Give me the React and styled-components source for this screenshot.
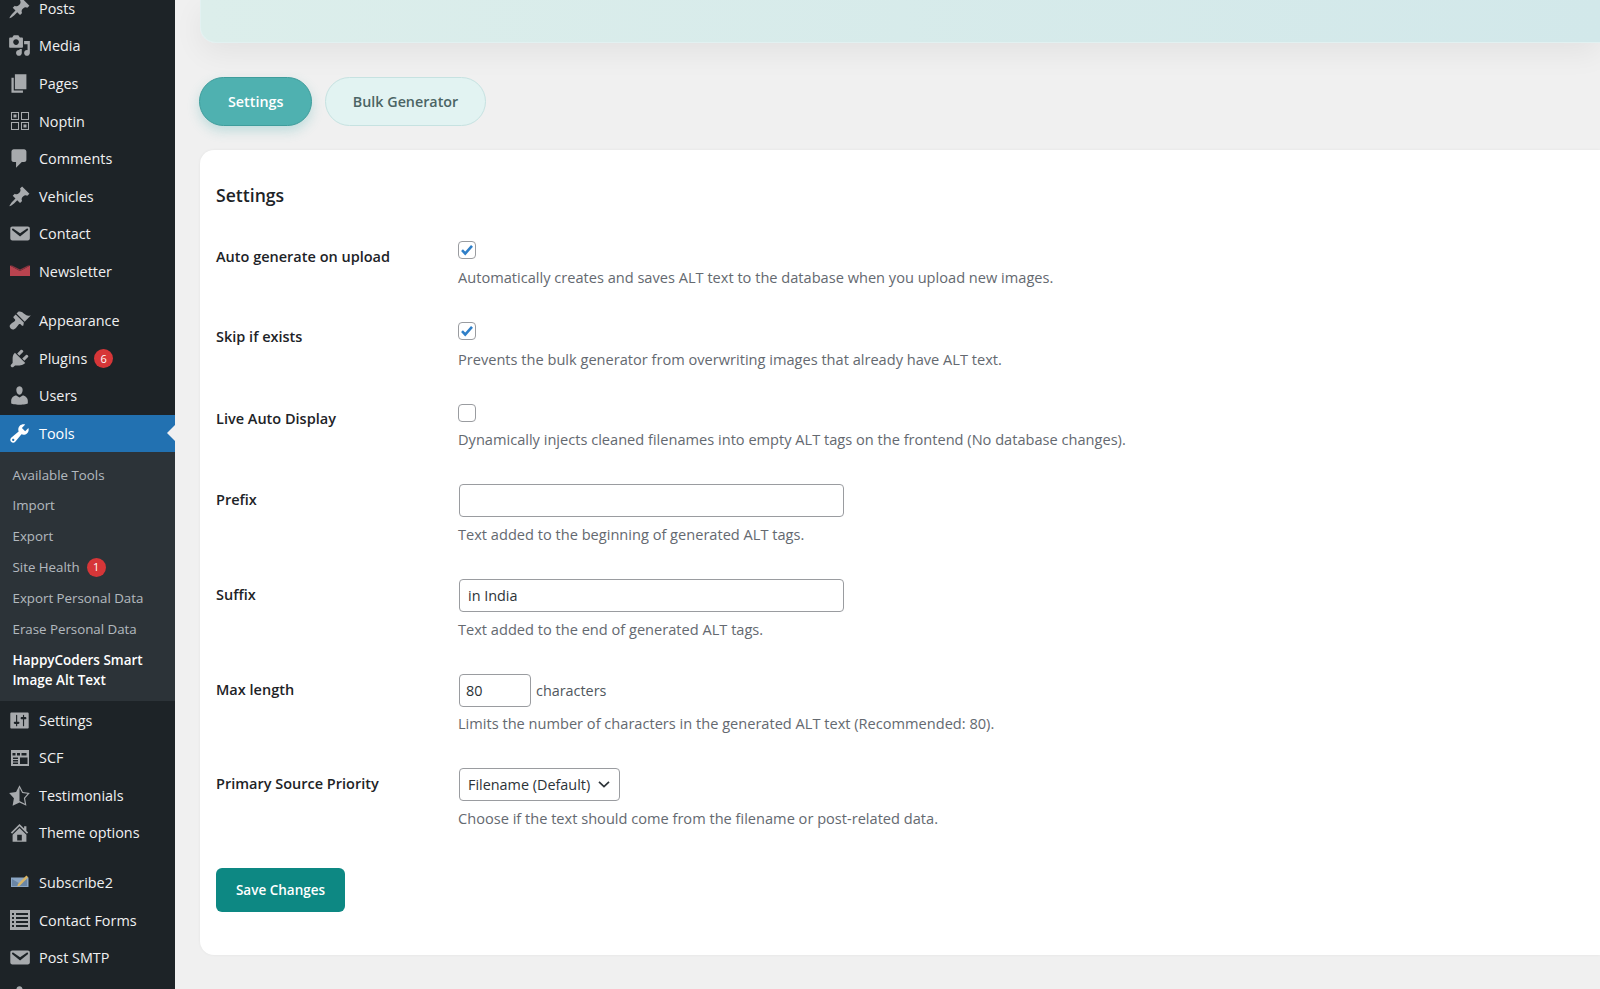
import React from 'react';
import styled, { createGlobalStyle } from 'styled-components';

const Global = createGlobalStyle`
  html, body { margin: 0; padding: 0; background: #f0f0f0; }
  body { font-family: "Open Sans", "Noto Sans", "Liberation Sans", sans-serif; }
`;

const Page = styled.div`
  display: flex;
  width: 1600px;
  height: 989px;
  overflow: hidden;
  background: #f0f0f0;
`;
const Sidebar = styled.nav`
  flex: 0 0 175px;
  height: 989px;
  overflow: hidden;
  background: #1d2327;
`;
const Menu = styled.ul`
  list-style: none;
  margin: ${p => p.$top || 0}px 0 0;
  padding: 0;
`;
const MenuItem = styled.li`
  position: relative;
  display: flex;
  align-items: center;
  height: 37.6px;
  background: ${p => (p.$active ? '#2271b1' : 'transparent')};
  color: ${p => (p.$active ? '#fff' : '#f0f0f1')};
  font-size: 14.4px;
  ${p => p.$active && `
    &::after {
      content: '';
      position: absolute;
      right: 0;
      top: 50%;
      margin-top: -8px;
      border: 8px solid transparent;
      border-right-color: #f0f0f1;
      border-left-width: 0;
    }
  `}
`;
const IconSlot = styled.span`
  flex: 0 0 39px;
  display: flex;
  justify-content: center;
  box-sizing: border-box;
  color: ${p => (p.$active ? '#fff' : '#a7aaad')};
  svg { display: block; }
`;
const Badge = styled.span`
  display: inline-flex;
  align-items: center;
  justify-content: center;
  width: 19px;
  height: 19px;
  margin-left: ${p => p.$gap}px;
  border-radius: 50%;
  background: #d63638;
  color: #fff;
  font-size: 11px;
`;
const Sub = styled.ul`
  list-style: none;
  margin: 0;
  padding: 7px 0 6px;
  background: #2c3338;
`;
const SubItem = styled.li`
  display: flex;
  align-items: center;
  padding: 5.45px 12px 5.45px 12.5px;
  box-sizing: border-box;
  color: ${p => (p.$current ? '#fff' : 'rgba(240,246,252,.7)')};
  font-size: ${p => (p.$current ? 13.5 : 13.3)}px;
  font-weight: ${p => (p.$current ? 600 : 400)};
  line-height: 20px;
`;
const SubText = styled.span`
  display: block;
`;
const Main = styled.main`
  flex: 1;
  min-width: 0;
  padding-left: 25px;
  display: flex;
  flex-direction: column;
  align-items: stretch;
`;
const Hero = styled.div`
  height: 43px;
  border-radius: 0 0 0 16px;
  background: linear-gradient(90deg, #dceeeb 0%, #d2e8ea 100%);
  border-bottom: 1px solid #e2f1f1;
  border-left: 1px solid #e2f1f1;
  box-sizing: border-box;
  box-shadow: 0 10px 30px rgba(0,0,0,.06);
`;
const Tabs = styled.div`
  display: flex;
  gap: 13px;
  margin-top: 34px;
  margin-left: -1px;
`;
const Tab = styled.button`
  height: 49px;
  padding: 0 ${p => (p.$active ? 28 : 26.5)}px;
  border-radius: 25px;
  font: 600 14.3px "Open Sans", "Noto Sans", sans-serif;
  cursor: pointer;
  color: ${p => (p.$active ? '#fff' : '#4b6464')};
  background: ${p => (p.$active ? '#4fb1b0' : '#e2f3f2')};
  border: 1px solid ${p => (p.$active ? '#3f9d9c' : '#c6e2e1')};
  box-shadow: ${p => (p.$active ? '0 5px 12px rgba(79,177,176,.3)' : 'none')};
`;
const Card = styled.section`
  margin-top: 24px;
  padding: 34px 16px 43px;
  background: #fff;
  border-radius: 14px 0 0 14px;
  box-shadow: 0 0 3px rgba(0,0,0,.06);
`;
const Heading = styled.h2`
  margin: 0 0 34px;
  font-size: 17.6px;
  font-weight: 600;
  line-height: 23px;
  color: #1d2327;
`;
const Form = styled.form`
  display: flex;
  flex-direction: column;
  gap: 34px;
`;
const Row = styled.div`
  display: grid;
  grid-template-columns: 242px 1fr;
`;
const Label = styled.label`
  padding-top: ${p => p.$top}px;
  font-size: 14.5px;
  font-weight: 600;
  line-height: 20px;
  color: #1d2327;
`;
const Desc = styled.p`
  margin: ${p => p.$top}px 0 ${p => p.$bottom}px;
  font-size: 14.6px;
  line-height: 20px;
  color: #646970;
`;
const CheckBox = styled.span`
  display: flex;
  align-items: center;
  justify-content: center;
  width: 18px;
  height: 18px;
  box-sizing: border-box;
  background: #fff;
  border: 1px solid #9a9ca0;
  border-radius: 4px;
`;
const Line = styled.div`
  display: flex;
  align-items: center;
  gap: 5px;
  color: #50575e;
  font-size: 14.4px;
`;
const Input = styled.input`
  display: block;
  width: ${p => p.$w}px;
  height: 33px;
  margin-left: 1px;
  padding: 0 ${p => p.$pad}px;
  box-sizing: border-box;
  border: 1px solid #9a9ca0;
  border-radius: 4px;
  background: #fff;
  color: #2c3338;
  font: 14.4px "Open Sans", "Noto Sans", sans-serif;
  outline: none;
`;
const Select = styled.div`
  display: flex;
  align-items: center;
  justify-content: space-between;
  width: 161px;
  height: 33px;
  margin-left: 1px;
  padding: 0 8px;
  box-sizing: border-box;
  border: 1px solid #9a9ca0;
  border-radius: 4px;
  background: #fff;
  color: #2c3338;
  font-size: 14.4px;
`;
const Save = styled.button`
  display: block;
  width: 129px;
  height: 44px;
  margin-top: 39px;
  padding: 0;
  border: 0;
  border-radius: 6px;
  background: #0d8883;
  color: #fff;
  font: 600 13.5px "Open Sans", "Noto Sans", sans-serif;
`;

const I = ({ d, size = 23, rule }) => (
  <svg width={size} height={size} viewBox="0 0 20 20" fill="currentColor">
    <path d={d} fillRule={rule} />
  </svg>
);
const pin = 'M10.44 3.02l1.82-1.82 6.36 6.35-1.83 1.82c-1.05-.68-2.48-.57-3.41.36l-.75.75c-.92.93-1.04 2.35-.35 3.41l-1.83 1.82-2.41-2.41-2.8 2.79c-.42.42-3.38 2.71-3.8 2.29s1.86-3.39 2.28-3.81l2.79-2.79L4.1 9.36l1.83-1.82c1.05.69 2.48.57 3.4-.36l.75-.75c.93-.92 1.05-2.35.36-3.41z';
const media = 'M13 11V4c0-.55-.45-1-1-1h-1.67L9 1H5L3.67 3H2c-.55 0-1 .45-1 1v7c0 .55.45 1 1 1h10c.55 0 1-.45 1-1zM7 4.5c1.38 0 2.5 1.12 2.5 2.5S8.38 9.5 7 9.5 4.5 8.38 4.5 7 5.62 4.5 7 4.5zM14 6h5v10.5c0 1.38-1.12 2.5-2.5 2.5S14 17.88 14 16.5s1.12-2.5 2.5-2.5c.17 0 .34.02.5.05V9h-3V6zm-4 8.05V13h2v3.5c0 1.38-1.12 2.5-2.5 2.5S7 17.88 7 16.5 8.12 14 9.5 14c.17 0 .34.02.5.05z';
const page = 'M6 15V2h10v13H6zm-1 1h8v2H3V5h2v11z';
const comment = 'M5 2h9c1.1 0 2 .9 2 2v7c0 1.1-.9 2-2 2h-2l-5 5v-5H5c-1.1 0-2-.9-2-2V4c0-1.1.9-2 2-2z';
const mail = 'M3.87 4h13.25C18.37 4 19 4.59 19 5.79v8.42c0 1.19-.63 1.79-1.88 1.79H3.87c-1.25 0-1.88-.6-1.88-1.79V5.79c0-1.2.63-1.79 1.88-1.79zm6.62 8.6l6.74-5.53c.24-.2.43-.66.13-1.07-.29-.41-.82-.42-1.17-.17l-5.7 3.86L4.8 5.83c-.35-.25-.88-.24-1.17.17-.3.41-.11.87.13 1.07z';
const brush = 'M14.48 11.06L7.41 3.99l1.5-1.5c.5-.56 2.3-.47 3.51.32 1.21.8 1.43 1.28 2.91 2.1 1.18.64 2.45 1.26 4.45.85zm-.71.71L6.7 4.7 4.93 6.47c-.39.39-.39 1.02 0 1.41l1.06 1.06c.39.39.39 1.03 0 1.42-.6.6-1.43 1.11-2.21 1.69-.35.26-.7.53-1.01.84C1.43 13.71.79 15.41 2.34 16.96c1.55 1.55 3.27.92 4.61-.42.31-.31.58-.66.84-1.01.58-.78 1.09-1.61 1.69-2.21.39-.39 1.03-.39 1.42 0l1.06 1.06c.39.39 1.02.39 1.41 0z';
const plug = 'M13.11 4.36L9.87 7.6 8 5.73l3.24-3.24c.35-.34 1.05-.2 1.56.32.52.51.66 1.21.31 1.55zm-8 1.77l.91-1.12 9.01 9.01-1.19.84c-.71.71-2.63 1.16-3.82 1.16H6.14L4.9 17.26c-.59.59-1.54.59-2.12 0-.59-.58-.59-1.53 0-2.12l1.24-1.24v-3.88c0-1.13.4-3.19 1.09-3.89zm7.26 3.97l3.24-3.24c.34-.35 1.04-.21 1.55.31.52.51.66 1.21.31 1.55l-3.24 3.25z';
const user = 'M10 9.25c-2.27 0-2.73-3.44-2.73-3.44C7 4.02 7.82 2 9.97 2c2.16 0 2.98 2.02 2.71 3.81 0 0-.41 3.44-2.68 3.44zm0 2.57L12.72 10c2.39 0 4.52 2.33 4.52 4.53v2.49s-3.65 1.13-7.24 1.13c-3.65 0-7.24-1.13-7.24-1.13v-2.49c0-2.25 1.94-4.48 4.47-4.48z';
const wrench = 'M16.68 9.77c-1.34 1.34-3.3 1.67-4.95.99l-5.41 6.52c-.99.99-2.59.99-3.58 0s-.99-2.59 0-3.57l6.52-5.42c-.68-1.65-.35-3.61.99-4.95 1.28-1.28 3.12-1.62 4.72-1.06l-2.89 2.89 2.82 2.82 2.86-2.87c.53 1.58.18 3.39-1.08 4.65zM3.81 16.21c.4.39 1.04.39 1.43 0 .4-.4.4-1.04 0-1.43-.39-.4-1.03-.4-1.43 0-.39.39-.39 1.03 0 1.43z';
const sliders = 'M18 16V4c0-.55-.45-1-1-1H3c-.55 0-1 .45-1 1v12c0 .55.45 1 1 1h14c.55 0 1-.45 1-1zM8 11h1c.55 0 1 .45 1 1s-.45 1-1 1H8v1.5c0 .28-.22.5-.5.5s-.5-.22-.5-.5V13H6c-.55 0-1-.45-1-1s.45-1 1-1h1V5.5c0-.28.22-.5.5-.5s.5.22.5.5V11zm5-2h-1c-.55 0-1-.45-1-1s.45-1 1-1h1V5.5c0-.28.22-.5.5-.5s.5.22.5.5V7h1c.55 0 1 .45 1 1s-.45 1-1 1h-1v5.5c0 .28-.22.5-.5.5s-.5-.22-.5-.5V9z';
const star = 'M10 1L7 7l-6 .75 4.13 4.62L4 19l6-3 6 3-1.13-6.63L19 7.75 13 7zm0 2.24l2.34 4.69 4.65.58-3.18 3.56.87 5.15L10 14.88V3.24z';
const home = 'M16 8.5l1.53 1.53-1.06 1.06L10 4.62l-6.47 6.47-1.06-1.06L10 2.5l4 4v-2h2v4zm-6-2.46l6 5.99V18H4v-5.97zM12 17v-5H8v5h4z';

const Noptin = () => (
  <svg width="20" height="20" viewBox="0 0 20 20" fill="none" stroke="currentColor">
    <rect x="1.500" y="1.500" width="7" height="7" />
    <rect x="11.500" y="1.500" width="7" height="7" />
    <rect x="1.500" y="11.500" width="7" height="7" />
    <rect x="11.500" y="11.500" width="7" height="7" />
    <rect x="3.500" y="3.500" width="3" height="3" fill="currentColor" stroke="none" />
    <rect x="13.500" y="13.500" width="3" height="3" fill="currentColor" stroke="none" />
  </svg>
);
const Envelope = () => (
  <svg width="20" height="20" viewBox="0 0 20 20">
    <path fill="#b9434f" d="M0 4.500l10 5.500 10-5.500V15H0z" />
    <path fill="#8e3540" d="M0 4.500h2l8 4 8-4h2l-10 5.500z" />
  </svg>
);
const Scf = () => (
  <svg width="20" height="20" viewBox="0 0 20 20" fill="currentColor">
    <path fillRule="evenodd" d="M1 2h18v16H1zM2.500 5v2.500h3V5zm4.500 0v2.500h3V5zm4.500 0v2.500h5V5zM3 9.500V11h5V9.500zm0 2.500v1.500h5V12zm0 2.500V16h5v-1.500zM10 9.500V16h7.500V9.500z" />
    <rect x="11.500" y="11" width="4.500" height="3.500" fill="#1d2327" />
  </svg>
);
const Subscribe = () => (
  <svg width="20" height="20" viewBox="0 0 20 20">
    <path fill="#8ba6c4" d="M1 5.500h17.500V15H1z" />
    <path fill="#6a86a6" d="M2 7l7.500 4.500L17 7v7H2z" />
    <path fill="#d8b566" d="M8 12l-.8 2.600 2.600-.8 8.400-8.600L16.400 3.400z" />
  </svg>
);
const ListForm = () => (
  <svg width="20" height="20" viewBox="0 0 20 20" fill="currentColor">
    <path fillRule="evenodd" d="M0 0h20v20H0zM2 3v2h2V3zm4 0v2h12V3zM2 7v2h2V7zm4 0v2h12V7zm-4 4v2h2v-2zm4 0v2h12v-2zm-4 4v2h2v-2zm4 0v2h12v-2z" />
  </svg>
);

const MI = ({ icon, label, active, children }) => (
  <MenuItem $active={active}>
    <IconSlot $active={active}>{icon}</IconSlot>
    {label}
    {children}
  </MenuItem>
);

const Check = () => (
  <svg width="14" height="14" viewBox="0 0 14 14" fill="none">
    <path d="M2 7.200l3.200 3.300L12 2.800" stroke="#2f7fc8" strokeWidth="2.600" />
  </svg>
);
const Chevron = () => (
  <svg width="14" height="14" viewBox="0 0 14 14" fill="none">
    <path d="M2 4.800L7 9.500l5-4.700" stroke="#2c3338" strokeWidth="1.700" />
  </svg>
);

export default function App() {
  return (
    <Page>
      <Global />
      <Sidebar>
        <Menu $top={-10.5}>
          <MI icon={<I d={pin} />} label="Posts" />
          <MI icon={<I d={media} />} label="Media" />
          <MI icon={<I d={page} />} label="Pages" />
          <MI icon={<Noptin />} label="Noptin" />
          <MI icon={<I d={comment} />} label="Comments" />
          <MI icon={<I d={pin} />} label="Vehicles" />
          <MI icon={<I d={mail} />} label="Contact" />
          <MI icon={<Envelope />} label="Newsletter" />
        </Menu>
        <Menu $top={11.5}>
          <MI icon={<I d={brush} />} label="Appearance" />
          <MI icon={<I d={plug} />} label="Plugins"><Badge $gap={7}>6</Badge></MI>
          <MI icon={<I d={user} />} label="Users" />
          <MI icon={<I d={wrench} />} label="Tools" active />
        </Menu>
        <Sub>
          <SubItem>Available Tools</SubItem>
          <SubItem>Import</SubItem>
          <SubItem>Export</SubItem>
          <SubItem>Site Health<Badge $gap={7}>1</Badge></SubItem>
          <SubItem>Export Personal Data</SubItem>
          <SubItem>Erase Personal Data</SubItem>
          <SubItem $current><SubText>HappyCoders Smart Image Alt Text</SubText></SubItem>
        </Sub>
        <Menu>
          <MI icon={<I d={sliders} />} label="Settings" />
          <MI icon={<Scf />} label="SCF" />
          <MI icon={<I d={star} />} label="Testimonials" />
          <MI icon={<I d={home} />} label="Theme options" />
        </Menu>
        <Menu $top={12}>
          <MI icon={<Subscribe />} label="Subscribe2" />
          <MI icon={<ListForm />} label="Contact Forms" />
          <MI icon={<I d={mail} />} label="Post SMTP" />
          <MI icon={<I d={user} />} label="" />
        </Menu>
      </Sidebar>
      <Main>
        <Hero />
        <Tabs>
          <Tab $active type="button">Settings</Tab>
          <Tab type="button">Bulk Generator</Tab>
        </Tabs>
        <Card>
          <Heading>Settings</Heading>
          <Form onSubmit={e => e.preventDefault()}>
            <Row>
              <Label $top={5.5}>Auto generate on upload</Label>
              <div>
                <CheckBox><Check /></CheckBox>
                <Desc $top={7.5} $bottom={1.5}>Automatically creates and saves ALT text to the database when you upload new images.</Desc>
              </div>
            </Row>
            <Row>
              <Label $top={5}>Skip if exists</Label>
              <div>
                <CheckBox><Check /></CheckBox>
                <Desc $top={8.5} $bottom={1}>Prevents the bulk generator from overwriting images that already have ALT text.</Desc>
              </div>
            </Row>
            <Row>
              <Label $top={5}>Live Auto Display</Label>
              <div>
                <CheckBox />
                <Desc $top={7.5} $bottom={0.5}>Dynamically injects cleaned filenames into empty ALT tags on the frontend (No database changes).</Desc>
              </div>
            </Row>
            <Row>
              <Label $top={6.5}>Prefix</Label>
              <div>
                <Input $w={385} $pad={8} defaultValue="" />
                <Desc $top={7} $bottom={1}>Text added to the beginning of generated ALT tags.</Desc>
              </div>
            </Row>
            <Row>
              <Label $top={6.5}>Suffix</Label>
              <div>
                <Input $w={385} $pad={8} defaultValue="in India" />
                <Desc $top={7} $bottom={1}>Text added to the end of generated ALT tags.</Desc>
              </div>
            </Row>
            <Row>
              <Label $top={6.5}>Max length</Label>
              <div>
                <Line><Input $w={72} $pad={6} defaultValue="80" />characters</Line>
                <Desc $top={6} $bottom={1}>Limits the number of characters in the generated ALT text (Recommended: 80).</Desc>
              </div>
            </Row>
            <Row>
              <Label $top={6.5}>Primary Source Priority</Label>
              <div>
                <Select>Filename (Default)<Chevron /></Select>
                <Desc $top={7} $bottom={1}>Choose if the text should come from the filename or post-related data.</Desc>
              </div>
            </Row>
          </Form>
          <Save type="button">Save Changes</Save>
        </Card>
      </Main>
    </Page>
  );
}
